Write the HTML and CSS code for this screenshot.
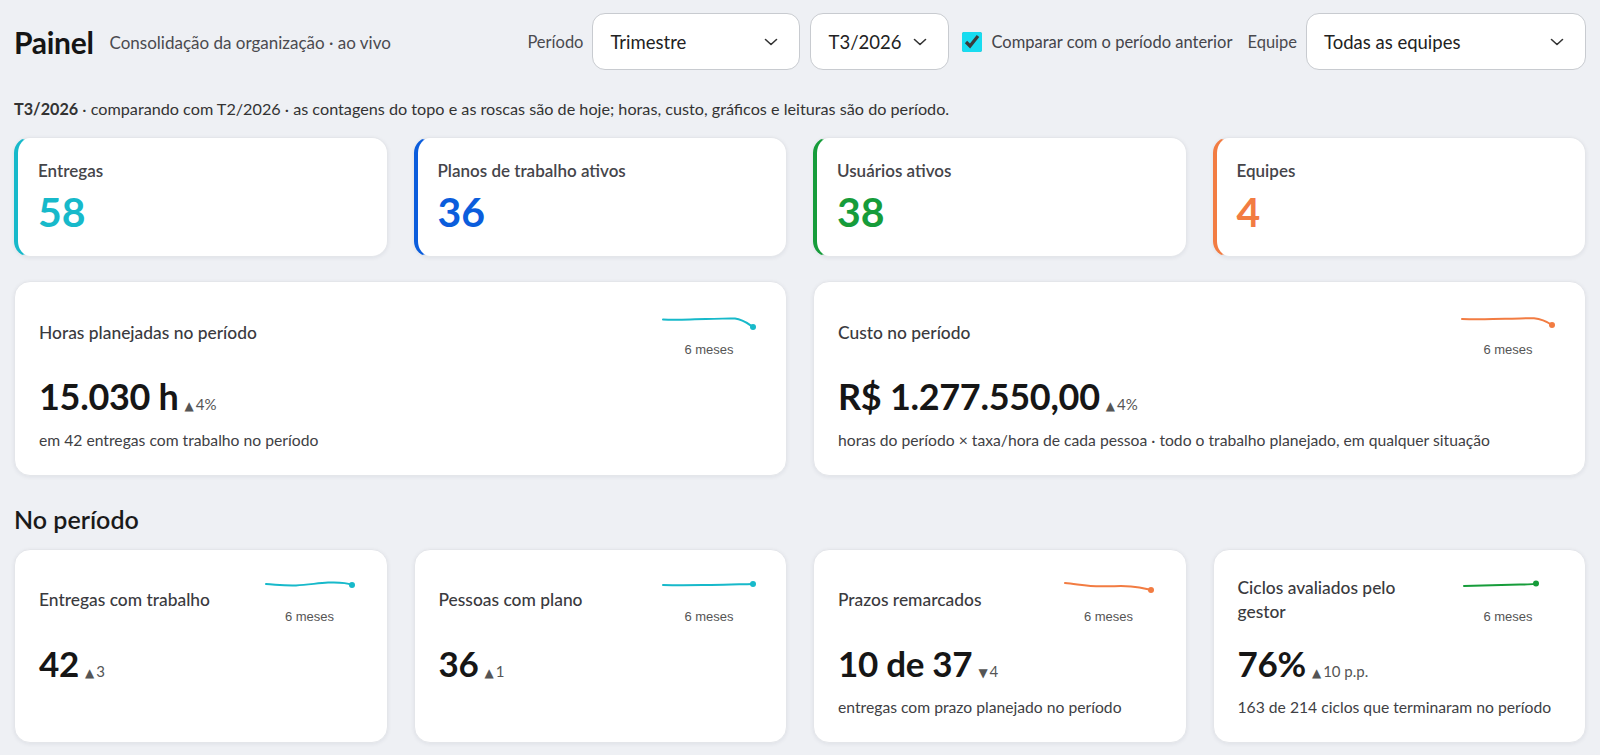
FILE: index.html
```html
<!DOCTYPE html>
<html lang="pt-BR">

<head>
    <meta charset="UTF-8">
    <meta name="viewport" content="width=device-width, initial-scale=1.0">
    <title>Painel</title>
    <link rel="stylesheet" href="styles.css">
</head>

<body>
    <div class="page">
        <header class="top">
            <div class="top__title">
                <h1>Painel</h1>
                <span class="top__sub">Consolidação da organização · ao vivo</span>
            </div>
            <div class="top__filters">
                <span class="filter__label">Período</span>
                <div class="select select--period">
                    <span>Trimestre</span>
                    <svg class="chevron" viewBox="0 0 14 8"><path d="M1.5 1.5 7 6.5l5.5-5" /></svg>
                </div>
                <div class="select select--quarter">
                    <span>T3/2026</span>
                    <svg class="chevron" viewBox="0 0 14 8"><path d="M1.5 1.5 7 6.5l5.5-5" /></svg>
                </div>
                <label class="compare">
                    <input type="checkbox" checked>
                    <span>Comparar com o período anterior</span>
                </label>
                <span class="filter__label filter__label--team">Equipe</span>
                <div class="select select--team">
                    <span>Todas as equipes</span>
                    <svg class="chevron" viewBox="0 0 14 8"><path d="M1.5 1.5 7 6.5l5.5-5" /></svg>
                </div>
            </div>
        </header>

        <p class="note"><b>T3/2026</b> · comparando com T2/2026 · as contagens do topo e as roscas são de hoje; horas, custo, gráficos e leituras são do período.</p>

        <!-- contagens de hoje -->
        <section class="grid grid--4">
            <div class="kpi kpi--cyan">
                <div class="kpi__label">Entregas</div>
                <div class="kpi__value">58</div>
            </div>
            <div class="kpi kpi--blue">
                <div class="kpi__label">Planos de trabalho ativos</div>
                <div class="kpi__value">36</div>
            </div>
            <div class="kpi kpi--green">
                <div class="kpi__label">Usuários ativos</div>
                <div class="kpi__value">38</div>
            </div>
            <div class="kpi kpi--orange">
                <div class="kpi__label">Equipes</div>
                <div class="kpi__value">4</div>
            </div>
        </section>

        <section class="grid grid--2 row-gap">
            <div class="metric">
                <div class="metric__head">
                    <div class="metric__title">Horas planejadas no período</div>
                    <div class="spark">
                        <svg class="spark__svg spark--cyan" viewBox="0 0 96 28">
                            <path d="M2 11.5 C 20 12.3, 30 11, 45 11 S 68 10, 74 10.6 C 82 11.5, 86 15, 92 19" />
                            <circle cx="92" cy="19" r="3" />
                        </svg>
                        <span class="spark__cap">6 meses</span>
                    </div>
                </div>
                <div class="metric__value">15.030 h<span class="delta"><i>▲</i>4%</span></div>
                <div class="metric__desc">em 42 entregas com trabalho no período</div>
            </div>
            <div class="metric">
                <div class="metric__head">
                    <div class="metric__title">Custo no período</div>
                    <div class="spark">
                        <svg class="spark__svg spark--orange" viewBox="0 0 96 28">
                            <path d="M2 11 C 20 11.8, 30 11, 45 10.8 S 68 9.8, 74 10.3 C 82 11, 86 13, 92 17" />
                            <circle cx="92" cy="17" r="3" />
                        </svg>
                        <span class="spark__cap">6 meses</span>
                    </div>
                </div>
                <div class="metric__value">R$ 1.277.550,00<span class="delta"><i>▲</i>4%</span></div>
                <div class="metric__desc">horas do período × taxa/hora de cada pessoa · todo o trabalho planejado, em qualquer situação</div>
            </div>
        </section>

        <h2 class="section-title">No período</h2>

        <section class="grid grid--4">
            <div class="metric metric--small">
                <div class="metric__head">
                    <div class="metric__title">Entregas com trabalho</div>
                    <div class="spark">
                        <svg class="spark__svg spark--cyan" viewBox="0 0 96 28">
                            <path d="M4 9 C 14 9.5, 22 10.8, 34 10.4 S 56 8, 66 7.6 C 76 7.2, 84 7.4, 90 10" />
                            <circle cx="90" cy="10" r="3" />
                        </svg>
                        <span class="spark__cap">6 meses</span>
                    </div>
                </div>
                <div class="metric__value">42<span class="delta"><i>▲</i>3</span></div>
            </div>
            <div class="metric metric--small">
                <div class="metric__head">
                    <div class="metric__title">Pessoas com plano</div>
                    <div class="spark">
                        <svg class="spark__svg spark--cyan" viewBox="0 0 96 28">
                            <path d="M2 10 C 20 10.6, 34 10.2, 50 10 S 76 9.4, 92 9" />
                            <circle cx="92" cy="9" r="3" />
                        </svg>
                        <span class="spark__cap">6 meses</span>
                    </div>
                </div>
                <div class="metric__value">36<span class="delta"><i>▲</i>1</span></div>
            </div>
            <div class="metric metric--small">
                <div class="metric__head">
                    <div class="metric__title">Prazos remarcados</div>
                    <div class="spark">
                        <svg class="spark__svg spark--orange" viewBox="0 0 96 28">
                            <path d="M4 8 C 16 9, 26 11.2, 40 11.3 S 60 10.6, 70 11.4 C 80 12, 84 13.5, 90 15" />
                            <circle cx="90" cy="15" r="3" />
                        </svg>
                        <span class="spark__cap">6 meses</span>
                    </div>
                </div>
                <div class="metric__value">10 de 37<span class="delta"><i>▼</i>4</span></div>
                <div class="metric__desc">entregas com prazo planejado no período</div>
            </div>
            <div class="metric metric--small">
                <div class="metric__head">
                    <div class="metric__title">Ciclos avaliados pelo gestor</div>
                    <div class="spark">
                        <svg class="spark__svg spark--green" viewBox="0 0 96 28">
                            <path d="M4 11 C 24 10.6, 44 10, 60 9.6 S 72 9, 76 8.6" />
                            <circle cx="76" cy="8.6" r="3" />
                        </svg>
                        <span class="spark__cap">6 meses</span>
                    </div>
                </div>
                <div class="metric__value">76%<span class="delta"><i>▲</i>10 p.p.</span></div>
                <div class="metric__desc">163 de 214 ciclos que terminaram no período</div>
            </div>
        </section>
    </div>
</body>

</html>
```

FILE: styles.css
```css
* {
    box-sizing: border-box;
}

body {
    margin: 0;
    background-color: #eef0f4;
    font-family: Lato, "Noto Sans", sans-serif;
    color: #1d1d1f;
}

.page {
    padding: 13px 14px 20px;
}

/* cabeçalho */

.top {
    display: flex;
    align-items: center;
    justify-content: space-between;
    height: 57px;
}

.top__title {
    display: flex;
    align-items: center;
    gap: 16px;
}

.top__title h1 {
    margin: 0;
    font-size: 30px;
    font-weight: 700;
    color: #151515;
    letter-spacing: -0.3px;
}

.top__sub {
    margin-top: 2px;
    font-size: 17px;
    color: #4a4a4f;
}

.top__filters {
    display: flex;
    align-items: center;
    height: 100%;
}

.top__filters > * {
    flex: none;
}

.filter__label {
    font-size: 16.5px;
    color: #4a4a4f;
    margin-right: 9px;
}

.filter__label--team {
    margin-left: 15px;
}

.select {
    display: flex;
    align-items: center;
    justify-content: space-between;
    height: 57px;
    padding: 0 21px 0 17px;
    background-color: #fff;
    border: 1px solid #c8cbd0;
    border-radius: 13px;
    font-size: 18.5px;
    color: #222;
}

.select--period {
    width: 208px;
    margin-right: 10px;
}

.select--quarter {
    width: 139px;
}

.select--team {
    width: 280px;
}

.chevron {
    width: 14px;
    height: 8px;
    fill: none;
    stroke: #333;
    stroke-width: 1.6;
    stroke-linecap: round;
    stroke-linejoin: round;
}

.compare {
    display: flex;
    align-items: center;
    gap: 9px;
    margin-left: 13px;
    font-size: 16.5px;
    color: #44444a;
}

.compare input {
    width: 20px;
    height: 20px;
    margin: 0;
    accent-color: #18dcf0;
}

.note {
    margin: 29px 0 18px;
    font-size: 16.2px;
    line-height: 20px;
    color: #333;
}

.note b {
    font-weight: 700;
}

/* grades de cartões */

.grid {
    display: grid;
    column-gap: 26px;
}

.grid--4 {
    grid-template-columns: repeat(4, 1fr);
}

.grid--2 {
    grid-template-columns: repeat(2, 1fr);
}

.row-gap {
    margin-top: 24px;
}

.kpi,
.metric {
    background-color: #fff;
    border: 1px solid #e4e6ea;
    border-radius: 16px;
    box-shadow: 0 1px 4px rgba(20, 30, 50, 0.07);
}

.kpi {
    padding: 22px 20px 20px;
    border-left-width: 4px;
}

.kpi__label {
    font-size: 17px;
    line-height: 22px;
    font-weight: 600;
    color: #45454a;
}

.kpi__value {
    margin-top: 6px;
    font-size: 41px;
    line-height: 48px;
    font-weight: 700;
}

.kpi--cyan { border-left-color: #17b9ca; }
.kpi--cyan .kpi__value { color: #17b9ca; }
.kpi--blue { border-left-color: #0b5ddc; }
.kpi--blue .kpi__value { color: #0b5ddc; }
.kpi--green { border-left-color: #169c3a; }
.kpi--green .kpi__value { color: #169c3a; }
.kpi--orange { border-left-color: #f27c42; }
.kpi--orange .kpi__value { color: #f27c42; }

.metric {
    padding: 26px 29px 25px 24px;
}

.metric--small {
    padding-top: 25px;
}

.metric__head {
    display: flex;
    align-items: center;
    justify-content: space-between;
    gap: 24px;
    min-height: 50px;
}

.metric__title {
    font-size: 17.4px;
    line-height: 24px;
    font-weight: 500;
    color: #3a3a3e;
}

.spark {
    display: flex;
    flex-direction: column;
    align-items: center;
    flex-shrink: 0;
}

.spark__svg {
    width: 96px;
    height: 28px;
    fill: none;
    stroke-width: 2;
    stroke-linecap: round;
}

.spark__svg circle {
    stroke: none;
}

.spark--cyan path { stroke: #17b9ca; }
.spark--cyan circle { fill: #17b9ca; }
.spark--orange path { stroke: #f27c42; }
.spark--orange circle { fill: #f27c42; }
.spark--green path { stroke: #169c3a; }
.spark--green circle { fill: #169c3a; }

.spark__cap {
    margin-top: 6px;
    font-family: "Liberation Sans", Arial, sans-serif;
    font-size: 13px;
    line-height: 16px;
    color: #555;
}

.metric__value {
    margin-top: 16px;
    font-size: 36px;
    line-height: 44px;
    font-weight: 700;
    color: #161616;
    letter-spacing: -0.3px;
}

.metric--small .metric__value {
    font-size: 35px;
}

.delta {
    margin-left: 6px;
    font-size: 15px;
    line-height: 1;
    font-weight: 400;
    color: #555;
    letter-spacing: 0;
}

.delta i {
    font-style: normal;
    font-family: "DejaVu Sans", sans-serif;
    font-size: 12px;
    line-height: 1;
    margin-right: 2px;
}

.metric__desc {
    margin-top: 12px;
    font-size: 15.7px;
    line-height: 20px;
    color: #404044;
}

.section-title {
    margin: 28px 0 15px;
    font-size: 25px;
    line-height: 30px;
    font-weight: 600;
    color: #1a1a1a;
}
```
